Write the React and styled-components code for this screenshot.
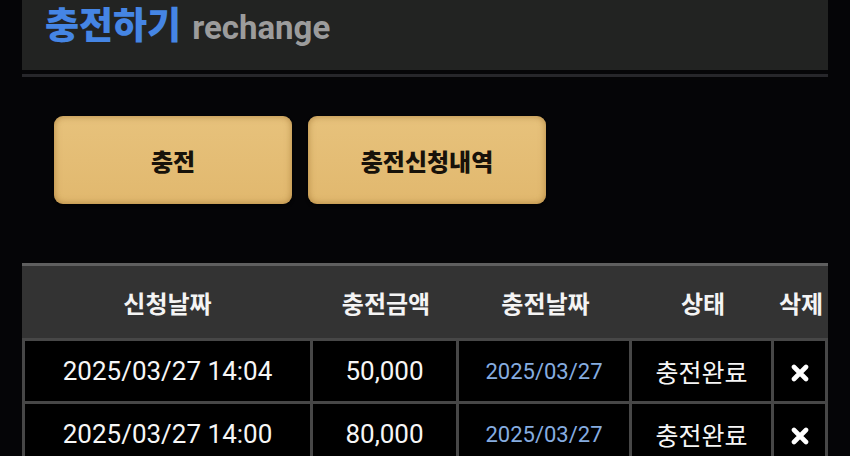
import React from 'react';
import styled, { createGlobalStyle } from 'styled-components';

const GlobalStyle = createGlobalStyle`
  html, body {
    margin: 0;
    background: #050507;
  }
  body {
    font-family: Roboto, "Noto Sans CJK KR", sans-serif;
    color: #fff;
  }
`;

const Page = styled.div`
  width: 806px;
  margin-left: 22px;
`;

const Header = styled.header`
  border-bottom: 3px solid #27272b;
`;

const TitleBar = styled.div`
  height: 67px;
  padding: 3px 0 0 23px;
  background: #222322;
  border-bottom: 4px solid #060608;
  display: flex;
  align-items: baseline;
  gap: 11px;
`;

const Title = styled.h1`
  margin: 0;
  font: 900 37px/1.1 "Noto Sans CJK KR", sans-serif;
  color: #4585e4;
`;

const SubTitle = styled.span`
  font: 700 33px/1.1 Roboto, sans-serif;
  color: #9c9c9c;
`;

const ButtonRow = styled.nav`
  display: flex;
  gap: 16px;
  padding: 39px 0 0 32px;
`;

const TabButton = styled.button`
  width: 238px;
  height: 88px;
  border: none;
  border-radius: 9px;
  background: linear-gradient(#e7c27c, #e1b86e);
  box-shadow: inset 0 0 7px rgba(140, 95, 30, 0.6), 0 2px 3px rgba(0, 0, 0, 0.6);
  font: 900 24px "Noto Sans CJK KR", sans-serif;
  color: #17120a;
  cursor: pointer;
`;

const Table = styled.table`
  margin-top: 59px;
  width: 806px;
  border-collapse: separate;
  border-spacing: 0;
  table-layout: fixed;
`;

const Col = styled.col`
  width: ${p => p.$w}px;
`;

const HeadCell = styled.th`
  height: 72px;
  padding: 0;
  background: #333333;
  border-top: 3px solid #5f5f5f;
  font: 700 24px "Noto Sans CJK KR", sans-serif;
  color: #f4f4f4;
`;

const Row = styled.tr`
  &:first-child td {
    border-top: 3px solid #474747;
  }
`;

const Cell = styled.td`
  height: 60px;
  padding: 0;
  background: #000;
  border-right: 3px solid #474747;
  border-bottom: 3px solid #474747;
  text-align: center;
  font-family: Roboto, "Noto Sans CJK KR", sans-serif;
  font-size: ${p => p.$size || 26}px;
  color: ${p => p.$color || '#f6f6f6'};

  &:first-child {
    border-left: 3px solid #474747;
  }
`;

const DeleteIcon = () => (
  <svg width="18" height="18" viewBox="0 0 18 18" style={{ verticalAlign: 'middle' }}>
    <path d="M3 3 L15 15 M15 3 L3 15" stroke="#fff" strokeWidth="4.6" strokeLinecap="round" />
  </svg>
);

const history = [
  { requested: '2025/03/27 14:04', amount: '50,000', charged: '2025/03/27', status: '충전완료' },
  { requested: '2025/03/27 14:00', amount: '80,000', charged: '2025/03/27', status: '충전완료' },
];

export default function App() {
  return (
    <Page>
      <GlobalStyle />
      <Header>
        <TitleBar>
          <Title>충전하기</Title>
          <SubTitle>rechange</SubTitle>
        </TitleBar>
      </Header>

      <ButtonRow>
        <TabButton>충전</TabButton>
        <TabButton>충전신청내역</TabButton>
      </ButtonRow>

      <Table>
        <colgroup>
          <Col $w={291} />
          <Col $w={146} />
          <Col $w={173} />
          <Col $w={142} />
          <Col $w={54} />
        </colgroup>
        <thead>
          <tr>
            <HeadCell>신청날짜</HeadCell>
            <HeadCell>충전금액</HeadCell>
            <HeadCell>충전날짜</HeadCell>
            <HeadCell>상태</HeadCell>
            <HeadCell>삭제</HeadCell>
          </tr>
        </thead>
        <tbody>
          {history.map(row => (
            <Row key={row.requested}>
              <Cell>{row.requested}</Cell>
              <Cell>{row.amount}</Cell>
              <Cell $size={22} $color="#86ade0">{row.charged}</Cell>
              <Cell $size={25}>{row.status}</Cell>
              <Cell><DeleteIcon /></Cell>
            </Row>
          ))}
        </tbody>
      </Table>
    </Page>
  );
}
